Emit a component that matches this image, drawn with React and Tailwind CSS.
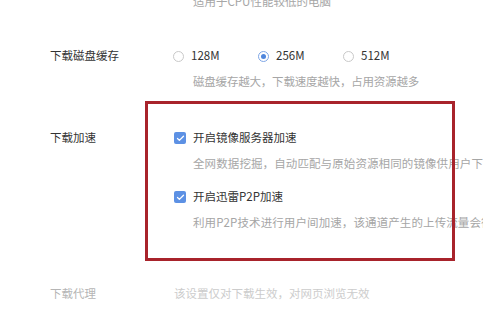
import { Check } from "lucide-react";

function Radio({ checked, label }) {
  return (
    <div className="flex shrink-0 items-center gap-[7px] w-[85px]">
      <span
        className={
          checked
            ? "w-[11px] h-[11px] rounded-full border border-[#7ea6e6] flex items-center justify-center"
            : "w-[11px] h-[11px] rounded-full border border-[#c9c9c9]"
        }
      >
        {checked && <span className="w-[5px] h-[5px] rounded-full bg-[#4f86dc]" />}
      </span>
      <span className="text-[#333]">{label}</span>
    </div>
  );
}

function CheckItem({ label }) {
  return (
    <div className="flex shrink-0 items-center gap-[7px]">
      <span className="w-[12px] h-[12px] rounded-[2px] bg-[#5d91e4] flex items-center justify-center">
        <Check className="w-[9px] h-[9px] text-white" strokeWidth={3.5} />
      </span>
      <span className="text-[#333]">{label}</span>
    </div>
  );
}

export default function App() {
  return (
    <div
      className="relative w-[483px] h-[311px] overflow-hidden bg-white text-[11.5px] whitespace-nowrap"
      style={{ fontFamily: '"Noto Sans CJK SC", "Noto Sans", sans-serif' }}
    >
      <div className="flex flex-col pl-[50px]">
        <div className="flex h-[20px] items-center -mt-[8px]">
          <div className="w-[143px] shrink-0" />
          <span className="text-[#a6a6a6]">适用于CPU性能较低的电脑</span>
        </div>

        <div className="flex h-[20px] items-center mt-[34px]">
          <div className="w-[123px] shrink-0 text-[#333]">下载磁盘缓存</div>
          <Radio label="128M" />
          <Radio checked label="256M" />
          <Radio label="512M" />
        </div>
        <div className="flex h-[20px] items-center mt-[6px]">
          <div className="w-[143px] shrink-0" />
          <span className="text-[#a6a6a6] tracking-[-0.2px]">磁盘缓存越大，下载速度越快，占用资源越多</span>
        </div>

        <div className="flex h-[20px] items-center mt-[36px]">
          <div className="w-[124px] shrink-0 text-[#333]">下载加速</div>
          <CheckItem label="开启镜像服务器加速" />
        </div>
        <div className="flex h-[20px] items-center mt-[6px]">
          <div className="w-[143px] shrink-0" />
          <span className="text-[#a6a6a6] tracking-[0.1px]">全网数据挖掘，自动匹配与原始资源相同的镜像供用户下载</span>
        </div>
        <div className="flex h-[20px] items-center mt-[13px]">
          <div className="w-[124px] shrink-0" />
          <CheckItem label="开启迅雷P2P加速" />
        </div>
        <div className="flex h-[20px] items-center mt-[6px]">
          <div className="w-[143px] shrink-0" />
          <span className="text-[#a6a6a6] tracking-[0.1px]">利用P2P技术进行用户间加速，该通道产生的上传流量会很大</span>
        </div>

        <div className="flex h-[20px] items-center mt-[51px]">
          <div className="w-[124px] shrink-0 text-[#b5b5b5]">下载代理</div>
          <span className="text-[#cccccc]">该设置仅对下载生效，对网页浏览无效</span>
        </div>
      </div>

      <div className="absolute left-[145px] top-[101px] w-[310px] h-[160px] border-[3px] border-[#a8232b]" />
    </div>
  );
}
